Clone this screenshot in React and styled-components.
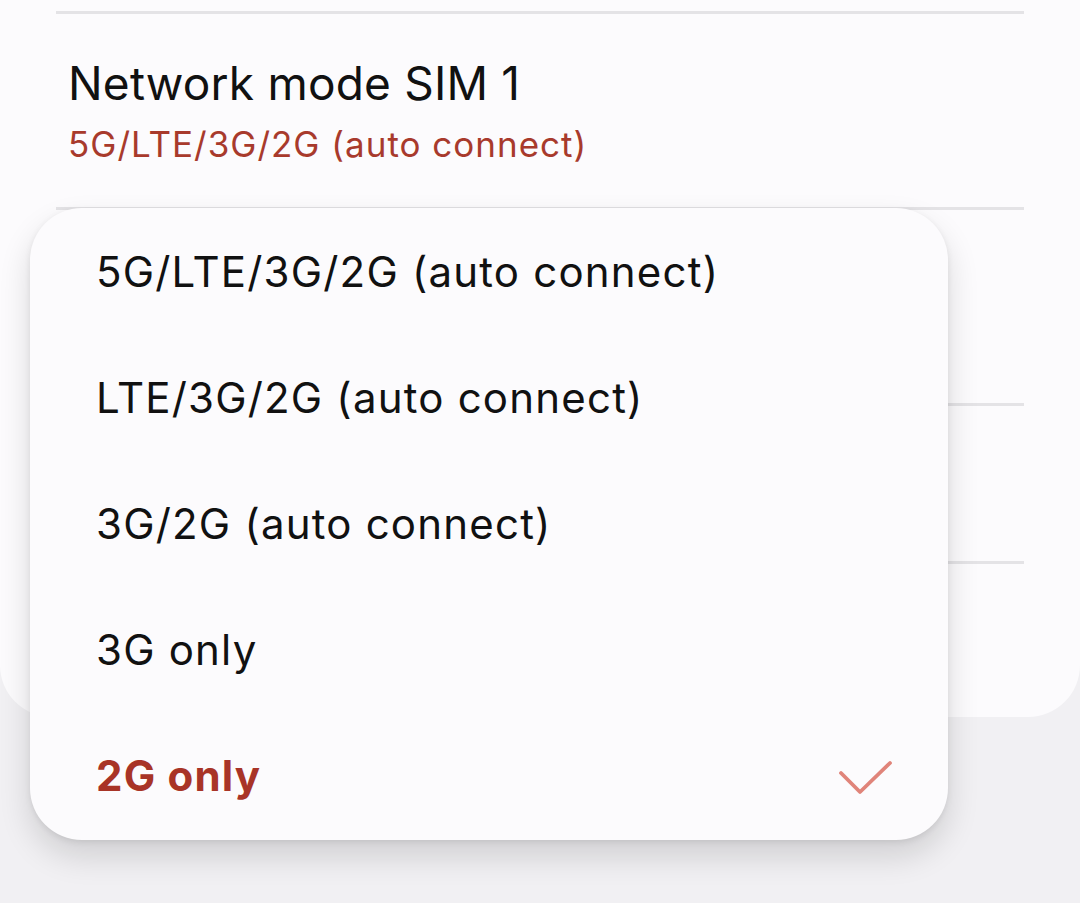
import styled, { createGlobalStyle } from 'styled-components';

const GlobalStyle = createGlobalStyle`
    html, body {
        margin: 0;
        padding: 0;
        background: #f0eff2;
    }
    body {
        font-family: Inter, "Noto Sans", sans-serif;
        -webkit-font-smoothing: antialiased;
    }
`;

const Screen = styled.div`
    position: relative;
    width: 1080px;
    height: 903px;
    overflow: hidden;
    background: #f1f0f3;
`;

const Card = styled.div`
    background: #fcfbfd;
    height: 717px;
    border-radius: 0 0 52px 52px;
    display: flex;
    flex-direction: column;
`;

const Row = styled.div`
    height: ${(p) => p.h}px;
    margin: 0 56px;
    border-bottom: ${(p) => (p.last ? 'none' : '3px solid #e4e3e6')};
    box-sizing: border-box;
    display: flex;
    flex-direction: column;
    justify-content: center;
    padding-left: 12px;
`;

const Title = styled.div`
    font-size: 46px;
    letter-spacing: 0.2px;
    color: #111;
    line-height: 1.2;
`;

const Summary = styled.div`
    font-size: 35px;
    letter-spacing: 1px;
    color: #a83a2c;
    margin-top: 12px;
    line-height: 1.2;
`;

const Popup = styled.div`
    position: absolute;
    left: 30px;
    top: 208px;
    width: 918px;
    height: 632px;
    background: #fcfbfd;
    border-radius: 52px;
    box-shadow: 0 16px 32px rgba(0, 0, 0, 0.14), 0 2px 6px rgba(0, 0, 0, 0.08);
    display: flex;
    flex-direction: column;
`;

const Option = styled.div`
    height: 126px;
    display: flex;
    align-items: center;
    justify-content: space-between;
    padding: 0 54px 0 66px;
    font-size: 42px;
    letter-spacing: 1.2px;
    color: ${(p) => (p.selected ? '#a83427' : '#111')};
    font-weight: ${(p) => (p.selected ? 700 : 400)};
`;

const Check = () => (
    <svg width="56" height="36" viewBox="0 0 56 36" fill="none" style={{ marginTop: 6 }}>
        <path d="M3 13 L22 32 L52 3" stroke="#e0847a" strokeWidth="3.8" strokeLinecap="round" strokeLinejoin="round" />
    </svg>
);

const options = ['5G/LTE/3G/2G (auto connect)', 'LTE/3G/2G (auto connect)', '3G/2G (auto connect)', '3G only', '2G only'];

const App = () => {
    const selected = '2G only';
    return (
        <Screen>
            <GlobalStyle />
            <Card>
                <Row h={14} />
                <Row h={196}>
                    <Title>Network mode SIM 1</Title>
                    <Summary>5G/LTE/3G/2G (auto connect)</Summary>
                </Row>
                <Row h={196} />
                <Row h={158} />
                <Row h={153} last />
            </Card>
            <Popup>
                {options.map((o) => (
                    <Option key={o} selected={o === selected}>
                        <span>{o}</span>
                        {o === selected && <Check />}
                    </Option>
                ))}
            </Popup>
        </Screen>
    );
};

export default App;
